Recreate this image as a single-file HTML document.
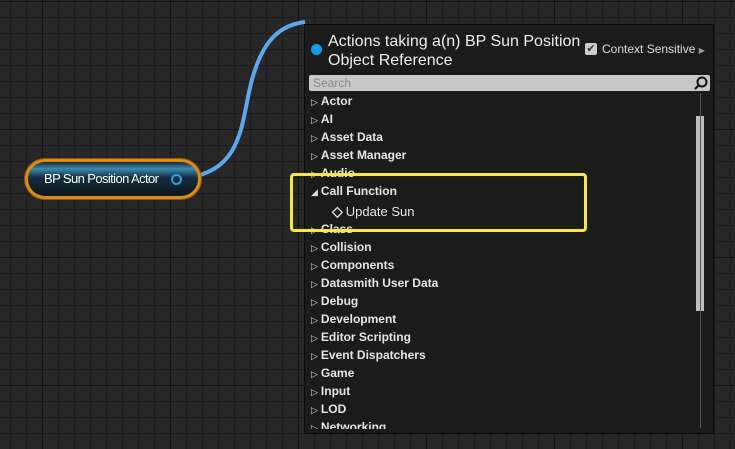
<!DOCTYPE html><html><head><style>
body{margin:0;width:735px;height:449px;overflow:hidden;position:relative;font-family:"Liberation Sans",sans-serif;
background-color:#272727;
background-image:linear-gradient(#141414 0 1px,transparent 1px),linear-gradient(90deg,#141414 0 1px,transparent 1px),linear-gradient(#1c1c1c 0 1px,transparent 1px),linear-gradient(90deg,#1c1c1c 0 1px,transparent 1px);
background-size:128px 128px,128px 128px,16px 16px,16px 16px;background-position:0 1px,42px 0,0 1px,10px 0;}
.node{position:absolute;left:25px;top:159px;width:170px;height:34px;border:3px solid #e08a10;border-radius:20px;background:linear-gradient(#1a2a33 0%,#3a8ab0 20%,#143040 45%,#0c1418 100%);box-shadow:0 0 0 1px #8a5a10;}
.node span{position:absolute;left:16px;top:9px;color:#fff;font-size:13px;letter-spacing:-0.6px;}
.pin{position:absolute;left:143px;top:12px;width:7px;height:7px;border:2px solid #2aa0e8;border-radius:50%;}
.pop{position:absolute;left:304px;top:24px;width:408px;height:408px;background:#1b1b1b;border:1px solid #0a0a0a;}
.row{position:absolute;left:6px;color:#e6e6e6;font-weight:bold;font-size:12px;white-space:nowrap;}
.row i{font-style:normal;font-weight:normal;font-size:9px;color:#ddd;margin-right:3px;}
</style></head><body>
<svg style="position:absolute;left:0;top:0" width="735" height="449"><path d="M186 178 C 250 170, 240 110, 255 70 C 265 40, 280 25, 305 22" stroke="#5aa8ee" stroke-width="4" fill="none"/><line x1="178" y1="178" x2="192" y2="177" stroke="#5a8ab0" stroke-width="4"/></svg>
<div class="node"><span>BP Sun Position Actor</span><div class="pin"></div></div>
<div class="pop">
<div style="position:absolute;left:6px;top:19px;width:11px;height:11px;border-radius:50%;background:#0ca0f0"></div>
<div style="position:absolute;left:23px;top:7px;color:#eee;font-size:16px;line-height:19px">Actions taking a(n) BP Sun Position<br>Object Reference</div>
<div style="position:absolute;left:280px;top:18px;width:12px;height:12px;background:#ccc;border-radius:2px;color:#333;font-size:11px;line-height:12px;text-align:center">✔</div>
<div style="position:absolute;left:297px;top:17px;color:#ddd;font-size:12px">Context Sensitive <span style="font-size:8px;color:#999">▶</span></div>
<div style="position:absolute;left:4px;top:50px;width:401px;height:16px;background:#c8c8c8;border-radius:2px"><span style="position:absolute;left:4px;top:1px;color:#888;font-size:12px">Search</span>
<svg style="position:absolute;right:2px;top:1px" width="14" height="14"><circle cx="8" cy="6" r="4.5" stroke="#111" stroke-width="2" fill="none"/><line x1="5" y1="9" x2="1" y2="13" stroke="#111" stroke-width="2"/></svg></div>
<div style="position:absolute;left:391px;top:91px;width:8px;height:195px;background:#bdbdbd"></div>
<div style="position:absolute;left:395px;top:68px;width:1px;height:335px;background:#555"></div>
<div style="position:absolute;left:0;top:68px;width:395px;height:336px;overflow:hidden">
<div class="row" style="top:1px"><i>▷</i>Actor</div>
<div class="row" style="top:19px"><i>▷</i>AI</div>
<div class="row" style="top:37px"><i>▷</i>Asset Data</div>
<div class="row" style="top:55px"><i>▷</i>Asset Manager</div>
<div class="row" style="top:73px"><i>▷</i>Audio</div>
<div class="row" style="top:91px"><i>◢</i>Call Function</div>
<div class="row" style="top:110px;left:27px;font-weight:normal;font-size:13px"><i style="font-size:14px;font-weight:bold">◇</i>Update Sun</div>
<div class="row" style="top:129px"><i>▷</i>Class</div>
<div class="row" style="top:147px"><i>▷</i>Collision</div>
<div class="row" style="top:165px"><i>▷</i>Components</div>
<div class="row" style="top:183px"><i>▷</i>Datasmith User Data</div>
<div class="row" style="top:201px"><i>▷</i>Debug</div>
<div class="row" style="top:219px"><i>▷</i>Development</div>
<div class="row" style="top:237px"><i>▷</i>Editor Scripting</div>
<div class="row" style="top:255px"><i>▷</i>Event Dispatchers</div>
<div class="row" style="top:273px"><i>▷</i>Game</div>
<div class="row" style="top:291px"><i>▷</i>Input</div>
<div class="row" style="top:309px"><i>▷</i>LOD</div>
<div class="row" style="top:327px"><i>▷</i>Networking</div>
</div></div>
<div style="position:absolute;left:290px;top:173px;width:291px;height:53px;border:3px solid #f5ea3c;border-radius:4px"></div>
</body></html>
